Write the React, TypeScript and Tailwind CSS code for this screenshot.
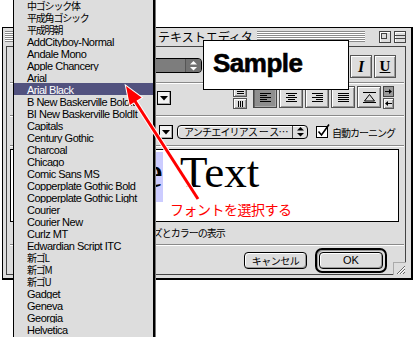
import React from "react";

const JP = "font-['Noto_Sans_CJK_JP',sans-serif]";
const LAT = "font-['Liberation_Sans',sans-serif] text-[11px] tracking-[-0.5px]";
const BEVEL =
  "border border-[#555555] bg-[#dddddd] shadow-[inset_1px_1px_0_#ffffff,inset_-1px_-1px_0_#999999]";
const PRESSED =
  "border border-[#444444] bg-[#8e8e8e] shadow-[inset_1px_1px_0_#666666,inset_-1px_-1px_0_#aaaaaa]";
const STRIPES =
  "bg-[image:repeating-linear-gradient(to_bottom,#8a8a8a_0px,#8a8a8a_1px,#ffffff_1px,#ffffff_2px)]";
const SEP = "ml-[3px] mr-[1px] h-[2px] border-t border-b border-t-[#8a8a8a] border-b-white";

const menuItems: { t: string; jp?: boolean; sel?: boolean }[] = [
  { t: "中ゴシック体", jp: true },
  { t: "平成角ゴシック", jp: true },
  { t: "平成明朝", jp: true },
  { t: "AddCityboy-Normal" },
  { t: "Andale Mono" },
  { t: "Apple Chancery" },
  { t: "Arial" },
  { t: "Arial Black", sel: true },
  { t: "B New Baskerville BoldIt" },
  { t: "BI New Baskerville BoldIt" },
  { t: "Capitals" },
  { t: "Century Gothic" },
  { t: "Charcoal" },
  { t: "Chicago" },
  { t: "Comic Sans MS" },
  { t: "Copperplate Gothic Bold" },
  { t: "Copperplate Gothic Light" },
  { t: "Courier" },
  { t: "Courier New" },
  { t: "Curlz MT" },
  { t: "Edwardian Script ITC" },
  { t: "新ゴL", jp: true },
  { t: "新ゴM", jp: true },
  { t: "新ゴU", jp: true },
  { t: "Gadget" },
  { t: "Geneva" },
  { t: "Georgia" },
  { t: "Helvetica" },
];

function AlignIcon({ kind, color = "#000" }: { kind: string; color?: string }) {
  const rows = [0, 2, 4, 6, 8];
  const lens = kind === "justify" ? [11, 11, 11, 11, 11] : [11, 7, 11, 7, 11];
  return (
    <svg width="11" height="9" viewBox="0 0 11 9">
      {rows.map((y, i) => {
        const l = lens[i];
        let x = 0;
        if (kind === "center") x = (11 - l) / 2;
        if (kind === "right") x = 11 - l;
        return <rect key={i} x={x} y={y} width={l} height="1" fill={color} />;
      })}
    </svg>
  );
}

function DownBtn({ className }: { className: string }) {
  return (
    <div className={`${className} w-[14px] h-[14px] border border-black bg-[#f2f2f2] flex items-center justify-center shadow-[inset_-1px_-1px_0_#aaaaaa]`}>
      <svg width="8" height="5" viewBox="0 0 8 5">
        <polygon points="0,0 8,0 4,4.5" fill="#000" />
      </svg>
    </div>
  );
}

function UpDown({ color = "#000" }: { color?: string }) {
  return (
    <svg width="7" height="10" viewBox="0 0 7 10">
      <polygon points="3.5,0 7,3.5 0,3.5" fill={color} />
      <polygon points="0,6 7,6 3.5,9.5" fill={color} />
    </svg>
  );
}

export default function App() {
  return (
    <div className="relative w-[413px] h-[337px] overflow-hidden bg-white font-['Liberation_Sans',sans-serif] text-black">
      {/* Window */}
      <div className="absolute left-[2px] top-[27px] w-[411px] h-[253px] flex flex-col bg-[#dddddd] border-t border-l border-r-2 border-b-2 border-black">
        {/* Title bar */}
        <div className="h-[17px] flex items-center">
          <div className={`ml-[2px] w-[150px] h-[11px] ${STRIPES}`} />
          <span className={`ml-[3px] w-[96px] text-[12px] leading-[17px] whitespace-nowrap ${JP}`}>テキストエディタ</span>
          <div className={`ml-[3px] w-[108px] h-[11px] ${STRIPES}`} />
          <div className="ml-[14px] w-[12px] h-[12px] border border-[#444444] bg-[#dddddd] relative shadow-[inset_1px_1px_0_#ffffff]">
            <div className="absolute left-[1px] top-[1px] w-[6px] h-[6px] border border-[#444444]" />
          </div>
          <div className="ml-[3px] w-[12px] h-[12px] border border-[#444444] bg-[#dddddd] flex flex-col justify-center gap-[2px] shadow-[inset_1px_1px_0_#ffffff]">
            <div className="h-[1px] bg-[#444444]" />
            <div className="h-[1px] bg-[#444444]" />
          </div>
        </div>

        {/* Content panel */}
        <div className="relative mt-[1px] ml-[3px] w-[400px] h-[229px] flex flex-col border border-[#444444] bg-[#dddddd]">
          {/* Row 1 */}
          <div className="h-[35px] flex items-start">
            <div className="ml-[13px] mt-[11px] w-[182px] h-[15px] rounded-[4px] border border-black bg-[#7d7d7d] flex overflow-hidden">
              <div className="flex-1 pl-[8px] text-[11px] leading-[13px] text-white">Arial Black</div>
              <div className="w-[16px] border-l border-[#555555] bg-[#727272] flex items-center justify-center">
                <UpDown color="#ffffff" />
              </div>
            </div>
            <div className="ml-auto mr-[9px] mt-[8px] flex gap-[2px]">
              <div className={`${BEVEL} w-[22px] h-[23px] flex items-center justify-center font-['Liberation_Serif',serif] font-bold text-[15px]`}>B</div>
              <div className={`${BEVEL} w-[22px] h-[23px] flex items-center justify-center font-['Liberation_Serif',serif] italic font-bold text-[16px]`}>I</div>
              <div className={`${BEVEL} w-[22px] h-[23px] flex items-center justify-center font-['Liberation_Serif',serif] font-bold text-[15px] underline`}>U</div>
            </div>
          </div>
          <div className={SEP} />

          {/* Row 2 */}
          <div className="h-[31px] flex items-start">
            <DownBtn className="ml-[150px] mt-[7px]" />
            <div className="ml-[62px] mt-[2px] flex flex-col gap-[1px]">
              <div className={`${BEVEL} w-[14px] h-[11px] flex flex-col items-center justify-center gap-[1px]`}>
                <div className="w-[7px] h-[1px] bg-black" />
                <div className="w-[7px] h-[1px] bg-black" />
                <div className="w-[7px] h-[1px] bg-black" />
              </div>
              <div className={`${BEVEL} w-[14px] h-[11px] flex items-center justify-center gap-[1px]`}>
                <div className="w-[1px] h-[6px] bg-black" />
                <div className="w-[1px] h-[6px] bg-black" />
                <div className="w-[1px] h-[6px] bg-black" />
              </div>
            </div>
            <div className="ml-[6px] mt-[2px] flex gap-[2px]">
              <div className={`${PRESSED} w-[24px] h-[22px] flex items-center justify-center`}>
                <AlignIcon kind="left" />
              </div>
              <div className={`${BEVEL} w-[24px] h-[22px] flex items-center justify-center`}>
                <AlignIcon kind="center" />
              </div>
              <div className={`${BEVEL} w-[24px] h-[22px] flex items-center justify-center`}>
                <AlignIcon kind="right" />
              </div>
              <div className={`${BEVEL} w-[24px] h-[22px] flex items-center justify-center`}>
                <AlignIcon kind="justify" />
              </div>
              <div className={`${BEVEL} w-[24px] h-[22px] flex items-center justify-center`}>
                <svg width="13" height="11" viewBox="0 0 13 11">
                  <rect x="0" y="0" width="13" height="1" fill="#000" />
                  <polygon points="6.5,2.5 11.5,9 1.5,9" fill="none" stroke="#000" strokeWidth="1" />
                  <rect x="0" y="10" width="13" height="1" fill="#000" />
                </svg>
              </div>
            </div>
            <div className="ml-[2px] mt-[2px] flex flex-col gap-[1px]">
              <div className="w-[11px] h-[11px] border border-[#444444] bg-[#9a9a9a] flex items-center justify-center">
                <svg width="7" height="5" viewBox="0 0 7 5">
                  <rect x="0" y="2" width="6" height="1" fill="#000" />
                  <polygon points="4,0 7,2.5 4,5" fill="#000" />
                </svg>
              </div>
              <div className={`${BEVEL} w-[11px] h-[11px] flex items-center justify-center`}>
                <svg width="7" height="5" viewBox="0 0 7 5">
                  <rect x="1" y="2" width="6" height="1" fill="#000" />
                  <polygon points="3,0 0,2.5 3,5" fill="#000" />
                </svg>
              </div>
            </div>
          </div>
          <div className={SEP} />

          {/* Row 3 */}
          <div className="h-[28px] flex items-start">
            <DownBtn className="ml-[152px] mt-[8px]" />
            <div className="ml-[4px] mt-[8px] w-[131px] h-[14px] rounded-[4px] border border-black bg-[#dddddd] flex overflow-hidden shadow-[inset_1px_1px_0_#ffffff]">
              <div className={`flex-1 pl-[6px] text-[10px] leading-[12px] tracking-[-0.8px] whitespace-nowrap ${JP}`}>アンチエイリアス ー ス…</div>
              <div className="w-[15px] border-l border-[#444444] flex items-center justify-center">
                <UpDown />
              </div>
            </div>
            <div className="ml-[8px] mt-[6px]">
              <svg width="14" height="15" viewBox="0 0 14 15">
                <rect x="0.5" y="3.5" width="11" height="11" fill="#fff" stroke="#000" />
                <path d="M2.5 8.5 L5.5 12 L13 1.5" fill="none" stroke="#000" strokeWidth="1.6" />
              </svg>
            </div>
            <div className={`ml-[2px] mt-[9px] text-[10px] leading-[13px] tracking-[-1px] whitespace-nowrap ${JP}`}>自動カーニング</div>
          </div>
          <div className={SEP} />

          {/* Preview */}
          <div className="mt-[2px] ml-[3px] w-[389px] h-[73px] bg-white border border-black overflow-hidden">
            <div className="pt-[2px] pl-[17px] whitespace-nowrap font-['Liberation_Serif',serif] text-[45px] leading-[40px]">
              <span className="inline-block h-[50px] bg-[#ccccff]">Sample</span>
              <span className="ml-[17px]">Text</span>
            </div>
          </div>

          {/* Row 4 */}
          <div className="h-[22px] flex items-center">
            <div className={`ml-[128px] text-[10px] leading-[12px] tracking-[-1px] whitespace-nowrap ${JP}`}>サイズとカラーの表示</div>
          </div>
          <div className={SEP} />

          {/* Buttons */}
          <div className="h-[28px] flex items-center">
            <div className={`ml-[237px] w-[63px] h-[17px] rounded-[4px] border border-black bg-[#dddddd] flex items-center justify-center shadow-[inset_1px_1px_0_#ffffff,inset_-1px_-1px_0_#999999] text-[10px] tracking-[-0.5px] ${JP}`}>キャンセル</div>
            <div className="ml-[8px] w-[72px] h-[25px] rounded-[7px] border-[2px] border-black bg-[#dddddd] flex items-center justify-center shadow-[inset_1px_1px_0_#999999]">
              <div className="w-[64px] h-[17px] rounded-[4px] border border-black bg-[#dddddd] flex items-center justify-center shadow-[inset_1px_1px_0_#ffffff,inset_-1px_-1px_0_#999999] text-[11px]">OK</div>
            </div>
          </div>

          {/* Grow box */}
          <div className="absolute right-[-1px] bottom-[-1px] w-[13px] h-[13px] bg-[#dddddd] border-l border-t border-[#aaaaaa]">
            <svg width="12" height="12" viewBox="0 0 12 12">
              <path d="M3 11 L11 3 M6 11 L11 6 M9 11 L11 9" stroke="#666" strokeWidth="1" />
              <path d="M4 11 L11 4 M7 11 L11 7" stroke="#fff" strokeWidth="1" />
            </svg>
          </div>
        </div>
      </div>

      {/* Font menu */}
      <div className="absolute left-[13px] top-0 w-[142px] h-[337px] bg-[#dddddd] border-l border-r-2 border-black shadow-[1px_0_0_#777777] overflow-hidden">
        <div className="-mt-[1px]">
          {menuItems.map((it) => (
            <div
              key={it.t}
              className={
                it.sel
                  ? "h-[12px] pl-[13px] leading-[12px] whitespace-nowrap overflow-hidden bg-[#52527f] text-white"
                  : "h-[12px] pl-[13px] leading-[12px] whitespace-nowrap overflow-hidden"
              }
            >
              <span className={it.jp ? `${JP} text-[10px] tracking-[-1.2px]` : LAT}>{it.t}</span>
            </div>
          ))}
        </div>
      </div>

      {/* Sample callout */}
      <div className="absolute left-[203px] top-[40px] w-[146px] h-[50px] bg-white border border-black flex items-start pt-[7px] pl-[9px]">
        <span className="font-bold text-[26px] leading-[30px] tracking-[-0.5px] [-webkit-text-stroke:0.6px_black]">Sample</span>
      </div>

      {/* Annotation text */}
      <div className={`absolute left-[170px] top-[201px] text-[14px] leading-[16px] tracking-[-0.5px] text-[#ff0000] whitespace-nowrap ${JP}`}>フォントを選択する</div>

      {/* Arrow */}
      <svg className="absolute left-0 top-0 pointer-events-none" width="413" height="337" viewBox="0 0 413 337">
        <line x1="198" y1="199" x2="133" y2="98" stroke="#ffffff" strokeWidth="5" />
        <polygon points="126,86 141.6,97.4 129.8,105" fill="#ffffff" stroke="#ffffff" strokeWidth="2" />
        <line x1="198" y1="199" x2="133" y2="98" stroke="#ff0000" strokeWidth="3" />
        <polygon points="126,86 141.6,97.4 129.8,105" fill="#ff0000" />
      </svg>
    </div>
  );
}
